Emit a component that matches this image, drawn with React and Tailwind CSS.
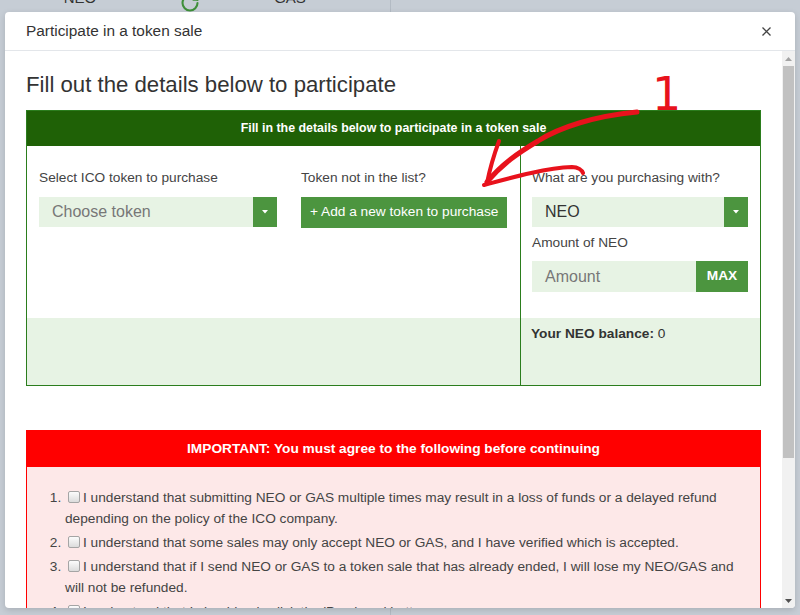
import React from "react";
import { RotateCw } from "lucide-react";

const GREEN_BTN = "bg-[#4c953f]";
const LIGHT = "bg-[#e7f3e4]";

function Caret() {
  return (
    <svg width="6" height="4" viewBox="0 0 6 4">
      <path d="M0 0 L6 0 L3 3.5 Z" fill="#fff" />
    </svg>
  );
}

function Check() {
  return (
    <span className="inline-block w-[12px] h-[12px] ml-[3px] mr-[3px] align-[-1px] rounded-[2px] border border-[#a5a5a5] bg-gradient-to-b from-[#fcfcfc] to-[#dcdcdc]" />
  );
}

export default function App() {
  return (
    <div className="relative w-[800px] h-[615px] overflow-hidden bg-[#c6cdd5] font-['Liberation_Sans',Arial,sans-serif]">
      {/* background page */}
      <div className="flex h-full">
        <div className="w-[391px] h-full border-r border-[#b3bbc4] flex items-start">
          <div className="flex w-full mt-[-13px] text-[15px] text-[#333]">
            <div className="w-[160px] text-center">NEO</div>
            <div className="w-[60px] flex justify-center pt-[6px]">
              <RotateCw size={20} color="#3f8f3a" strokeWidth={2.5} />
            </div>
            <div className="w-[140px] text-center">GAS</div>
          </div>
        </div>
        <div className="flex-1" />
      </div>

      {/* modal */}
      <div className="absolute left-[5px] top-[12px] w-[790px] h-[596px] bg-white rounded-[4px] flex flex-col overflow-hidden shadow-[0_2px_6px_rgba(0,0,0,0.15)]">
        <div className="h-[39px] shrink-0 border-b border-[#e3e6ea] flex items-center justify-between pl-[21px] pr-[24px]">
          <span className="text-[15.4px] text-[#333]">Participate in a token sale</span>
          <svg width="9" height="9" viewBox="0 0 9 9">
            <path d="M0.5 0.5 L8.5 8.5 M8.5 0.5 L0.5 8.5" stroke="#444" strokeWidth="1.3" />
          </svg>
        </div>
        <div className="flex flex-1 min-h-0">
          <div className="flex-1 overflow-hidden px-[21px]">
            <h2 className="text-[22.2px] leading-[26px] text-[#333] mt-[21px] mb-[12px]">
              Fill out the details below to participate
            </h2>

            {/* green panel */}
            <div className="border border-[#2b7d1d]">
              <div className="h-[35px] bg-[#1f6106] flex items-center justify-center text-white text-[12.4px] font-bold">
                Fill in the details below to participate in a token sale
              </div>
              <div className="flex">
                <div className="flex-1 flex flex-col">
                  <div className="h-[172px] flex pt-[22px] pl-[12px] gap-[24px] text-[13.7px] text-[#444]">
                    <div className="w-[238px]">
                      <div className="leading-[20px]">Select ICO token to purchase</div>
                      <div className={`mt-[9px] h-[30px] flex ${LIGHT}`}>
                        <div className="flex-1 pl-[13px] flex items-center text-[16px] text-[#777]">Choose token</div>
                        <div className={`w-[24px] flex items-center justify-center ${GREEN_BTN}`}>
                          <Caret />
                        </div>
                      </div>
                    </div>
                    <div>
                      <div className="leading-[20px]">Token not in the list?</div>
                      <div className={`mt-[9px] h-[31px] px-[9px] flex items-center text-white text-[13.7px] ${GREEN_BTN}`}>
                        + Add a new token to purchase
                      </div>
                    </div>
                  </div>
                  <div className={`h-[67px] ${LIGHT}`} />
                </div>
                <div className="w-[240px] border-l border-[#2b7d1d] flex flex-col">
                  <div className="h-[172px] pt-[22px] pl-[11px] pr-[12px] text-[13.7px] text-[#444]">
                    <div className="leading-[20px]">What are you purchasing with?</div>
                    <div className={`mt-[9px] h-[30px] flex ${LIGHT}`}>
                      <div className="flex-1 pl-[13px] flex items-center text-[16px] text-[#333]">NEO</div>
                      <div className={`w-[24px] flex items-center justify-center ${GREEN_BTN}`}>
                        <Caret />
                      </div>
                    </div>
                    <div className="leading-[20px] mt-[6px]">Amount of NEO</div>
                    <div className={`mt-[8px] h-[31px] flex ${LIGHT}`}>
                      <div className="flex-1 pl-[13px] flex items-center text-[16px] text-[#777]">Amount</div>
                      <div className={`w-[52px] flex items-center justify-center text-white text-[13.7px] font-bold ${GREEN_BTN}`}>
                        MAX
                      </div>
                    </div>
                  </div>
                  <div className={`h-[67px] pt-[6px] pl-[10px] text-[13.7px] leading-[20px] text-[#333] ${LIGHT}`}>
                    <span className="font-bold">Your NEO balance:</span> 0
                  </div>
                </div>
              </div>
            </div>

            {/* red panel */}
            <div className="mt-[44px] border border-[#ff0000]">
              <div className="h-[36px] bg-[#ff0000] flex items-center justify-center text-white text-[13.7px] font-bold">
                IMPORTANT: You must agree to the following before continuing
              </div>
              <ol className="list-decimal bg-[#fde8e8] pl-[38px] pr-[15px] pt-[20px] pb-[20px] text-[13.7px] leading-[21px] text-[#444]">
                <li className="mb-[3px]">
                  <Check />I understand that submitting NEO or GAS multiple times may result in a loss of funds or a delayed refund depending on the policy of the ICO company.
                </li>
                <li className="mb-[3px]">
                  <Check />I understand that some sales may only accept NEO or GAS, and I have verified which is accepted.
                </li>
                <li className="mb-[3px]">
                  <Check />I understand that if I send NEO or GAS to a token sale that has already ended, I will lose my NEO/GAS and will not be refunded.
                </li>
                <li className="mb-[3px]">
                  <Check />I understand that I should only click the 'Purchase' button once.
                </li>
              </ol>
            </div>
          </div>

          {/* scrollbar */}
          <div className="w-[13px] shrink-0 bg-[#f1f1f1] flex flex-col items-center">
            <div className="h-[15px] flex items-center justify-center">
              <svg width="7" height="4" viewBox="0 0 7 4"><path d="M0 4 L7 4 L3.5 0 Z" fill="#a3a3a3" /></svg>
            </div>
            <div className="w-[11px] h-[392px] bg-[#c1c1c1]" />
            <div className="flex-1" />
            <div className="h-[14px] flex items-center justify-center">
              <svg width="7" height="4" viewBox="0 0 7 4"><path d="M0 0 L7 0 L3.5 4 Z" fill="#505050" /></svg>
            </div>
          </div>
        </div>
      </div>

      {/* red annotation */}
      <div className="absolute left-[652px] top-[68px] text-[46px] leading-[52px] text-[#e8121c] font-['DejaVu_Sans',sans-serif] pointer-events-none">
        1
      </div>
      <svg className="absolute left-0 top-0 pointer-events-none" width="800" height="615" viewBox="0 0 800 615">
        <g stroke="#e8121c" fill="none" strokeLinecap="round" strokeLinejoin="round">
          <path d="M637 112 C595 116 560 127 538 141 C518 153 502 164 487 182" strokeWidth="5" />
          <path d="M487 183 C490 168 495 152 499 141" strokeWidth="4" />
          <path d="M484 185 C510 178 545 168 572 167 C578 167 582 170 583 173" strokeWidth="4" />
        </g>
      </svg>
    </div>
  );
}
